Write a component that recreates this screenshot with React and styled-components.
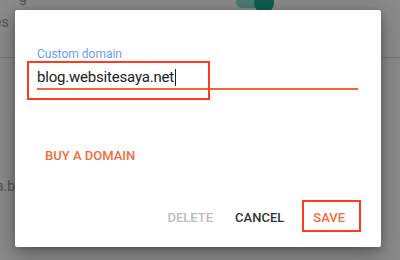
import styled, { createGlobalStyle } from "styled-components";

const GlobalStyle = createGlobalStyle`
  html, body {
    margin: 0;
    padding: 0;
    background: #ffffff;
    font-family: Roboto, "Liberation Sans", Arial, sans-serif;
  }
`;

const Screen = styled.div`
  position: relative;
  width: 400px;
  height: 260px;
  overflow: hidden;
  background: #ffffff;
`;

/* page behind the dialog, mostly hidden */
const BehindPage = styled.div`
  display: flex;
  flex-direction: column;
  color: #9a9a9a;
  font-size: 14px;
  line-height: 16px;
`;

const TopRow = styled.div`
  display: grid;
  grid-template-columns: 236px auto;
  align-items: start;
  height: 12px;
  margin-top: -8px;
`;

const Title = styled.span`
  margin-top: -2px;
  padding-left: 19px;
  font-size: 14px;
  line-height: 14px;
  color: #9a9a9a;
`;

const Toggle = styled.div`
  position: relative;
  width: 24px;
  height: 12px;
  margin-top: 4px;
  border-radius: 6px;
  background: #8be2cf;

  &::after {
    content: "";
    position: absolute;
    right: -14px;
    top: -3px;
    width: 20px;
    height: 20px;
    border-radius: 50%;
    background: #18aa8b;
  }
`;

const Hint = styled.div`
  margin-top: 10px;
  margin-left: -6px;
  font-size: 14px;
`;

const Divider = styled.div`
  margin-top: 27px;
  width: 100%;
  border-top: 1px solid #d6d6d6;
`;

const Url = styled.div`
  margin-top: 120px;
  margin-left: -4px;
  font-size: 14px;
`;

const Overlay = styled.div`
  position: absolute;
  inset: 0;
  background: rgba(0, 0, 0, 0.46);
`;

const Dialog = styled.div`
  display: flex;
  flex-direction: column;
  box-sizing: border-box;
  width: 366px;
  height: 237px;
  margin: 10px 0 0 15px;
  padding: 0 23px 0 22px;
  background: #ffffff;
  border-radius: 2px;
  box-shadow: 0 6px 22px rgba(0, 0, 0, 0.32), 0 2px 6px rgba(0, 0, 0, 0.2);
`;

const Field = styled.div`
  position: relative;
  display: flex;
  flex-direction: column;
  margin-top: 37px;
`;

const Label = styled.label`
  font-size: 12px;
  line-height: 14px;
  color: #6a9cf2;
`;

const InputLine = styled.div`
  display: flex;
  align-items: center;
  margin-top: 6px;
  height: 21px;
  font-size: 15px;
  line-height: 21px;
  letter-spacing: -0.2px;
  color: #212121;
  border-bottom: 2px solid #f4633a;
`;

const Caret = styled.span`
  display: inline-block;
  width: 1px;
  height: 17px;
  margin-left: 1px;
  background: #222;
`;

const Highlight = styled.div`
  position: absolute;
  left: ${(p) => p.$left}px;
  top: ${(p) => p.$top}px;
  width: ${(p) => p.$width}px;
  height: ${(p) => p.$height}px;
  box-sizing: border-box;
  border: 2px solid #ff3a1e;
  pointer-events: none;
`;

const TextButton = styled.button`
  height: 36px;
  padding: 0 10px;
  border: none;
  background: transparent;
  font-family: Roboto, "Liberation Sans", Arial, sans-serif;
  font-size: 13px;
  font-weight: 500;
  line-height: 15px;
  letter-spacing: 0;
  text-transform: uppercase;
  color: ${(p) => p.$color};
  cursor: pointer;
`;

const BuyButton = styled(TextButton)`
  align-self: flex-start;
  margin-top: 47px;
  padding: 0 8px;
`;

const Actions = styled.div`
  display: flex;
  justify-content: flex-end;
  align-items: center;
  gap: 2px;
  margin-top: auto;
  margin-right: 3px;
  padding-bottom: 12px;
`;

const SaveWrap = styled.div`
  position: relative;
  margin-left: 7px;
`;

export default function App() {
  return (
    <Screen>
      <GlobalStyle />
      <BehindPage>
        <TopRow>
          <Title>g</Title>
          <Toggle />
        </TopRow>
        <Hint>es</Hint>
        <Divider />
        <Url>a.b</Url>
      </BehindPage>
      <Overlay>
        <Dialog>
          <Field>
            <Label>Custom domain</Label>
            <InputLine>
              blog.websitesaya.net
              <Caret />
            </InputLine>
            <Highlight $left={-10} $top={14} $width={183} $height={39} />
          </Field>
          <BuyButton $color="#f26b3a">Buy a domain</BuyButton>
          <Actions>
            <TextButton $color="#bdbdbd">Delete</TextButton>
            <TextButton $color="#333333">Cancel</TextButton>
            <SaveWrap>
              <TextButton $color="#f26b3a">Save</TextButton>
              <Highlight $left={-1} $top={1} $width={59} $height={32} />
            </SaveWrap>
          </Actions>
        </Dialog>
      </Overlay>
    </Screen>
  );
}
